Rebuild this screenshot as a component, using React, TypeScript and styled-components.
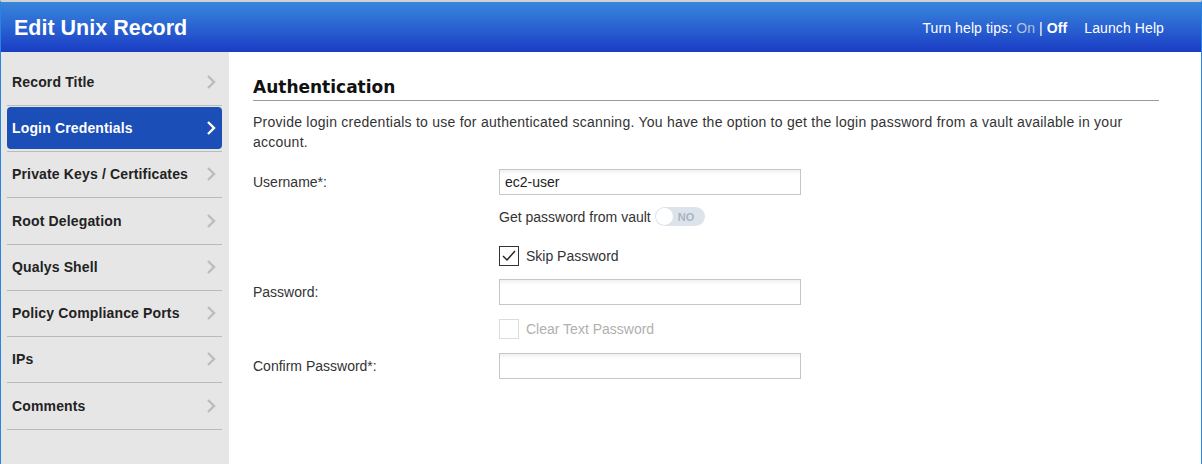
import React from "react";
import styled, { createGlobalStyle } from "styled-components";

const Global = createGlobalStyle`
  html, body { margin: 0; padding: 0; background: #fff; }
  body { font-family: "Liberation Sans", Arial, sans-serif; }
  * { box-sizing: border-box; }
`;

const Frame = styled.div`
  width: 1202px;
  height: 464px;
  border-top: 2px solid #d2d2d2;
  border-left: 1px solid #2784e2;
  border-right: 1px solid #2784e2;
  display: flex;
  flex-direction: column;
  overflow: hidden;
`;

const Header = styled.header`
  height: 50px;
  flex: none;
  background: linear-gradient(to bottom, #3886dd 0%, #2a63d2 50%, #1a3cc4 100%);
  display: flex;
  align-items: center;
  justify-content: space-between;
  padding: 0 37px 0 13px;
  color: #fff;
`;

const Title = styled.h1`
  margin: 0;
  font-size: 21.5px;
  font-weight: bold;
  font-family: "Liberation Sans", Arial, sans-serif;
  padding-top: 2px;
`;

const HelpBar = styled.div`
  display: flex;
  align-items: center;
  gap: 17px;
  font-size: 14px;
  padding-top: 2px;
  letter-spacing: 0.1px;
`;

const HelpToggle = styled.span``;

const Dim = styled.span`
  color: #b3c3dc;
`;

const Strong = styled.span`
  font-weight: bold;
`;

const Body = styled.div`
  flex: 1;
  display: flex;
`;

const Sidebar = styled.nav`
  width: 228px;
  flex: none;
  background: #e6e6e6;
  padding: 7.4px 7px 0 6px;
`;

const NavItem = styled.div`
  border-bottom: 1px solid #bababa;
  padding: 1.3px 0 2px;
`;

const NavLink = styled.div<{ $active?: boolean }>`
  height: 42px;
  display: flex;
  align-items: center;
  justify-content: space-between;
  padding: 0 6px 0 5px;
  border-radius: 4px;
  background: ${(p) => (p.$active ? "#1b4eb6" : "transparent")};
  color: ${(p) => (p.$active ? "#fff" : "#222")};
  font-size: 14px;
  font-weight: bold;
  letter-spacing: 0.15px;
`;

const Chevron = ({ active }: { active?: boolean }) => (
  <svg width="10" height="16" viewBox="0 0 10 16">
    <polyline
      points="2,2 8,8 2,14"
      fill="none"
      stroke={active ? "#fff" : "#bcbcbc"}
      strokeWidth="2.4"
    />
  </svg>
);

const Main = styled.main`
  flex: 1;
  padding: 25px 42px 0 24px;
  color: #333;
  font-size: 14px;
`;

const Heading = styled.h2`
  margin: 0;
  font-family: "DejaVu Sans", Verdana, sans-serif;
  font-weight: bold;
  font-size: 17px;
  line-height: 20px;
  color: #111;
  padding-bottom: 3px;
  border-bottom: 1px solid #9a9a9a;
`;

const Description = styled.p`
  margin: 11px 0 0;
  line-height: 20px;
  color: #333;
  letter-spacing: 0.25px;
`;

const Form = styled.div`
  margin-top: 17px;
  display: grid;
  grid-template-columns: 246px 302px;
`;

const Label = styled.div<{ $gap?: number }>`
  grid-column: 1;
  display: flex;
  align-items: center;
  height: 26px;
  margin-top: ${(p) => p.$gap ?? 0}px;
  color: #333;
`;

const Field = styled.div<{ $gap?: number }>`
  grid-column: 2;
  margin-top: ${(p) => p.$gap ?? 0}px;
`;

const TextInput = styled.div`
  height: 26px;
  border: 1px solid #c6c6c6;
  background: linear-gradient(to bottom, #f1f1f1 0px, #fff 5px);
  display: flex;
  align-items: center;
  padding-left: 5px;
  color: #222;
  font-size: 14px;
`;

const VaultRow = styled.div`
  display: flex;
  align-items: center;
  gap: 4px;
  height: 19px;
  color: #333;
`;

const Toggle = styled.div`
  width: 50px;
  height: 19px;
  border-radius: 10px;
  background: #dde3ea;
  display: flex;
  align-items: center;
  padding-left: 1px;
  gap: 5px;
`;

const Knob = styled.span`
  width: 17px;
  height: 17px;
  border-radius: 50%;
  background: #fff;
`;

const ToggleText = styled.span`
  font-size: 11px;
  font-weight: bold;
  color: #aab4c2;
`;

const CheckRow = styled.div<{ $disabled?: boolean }>`
  display: flex;
  align-items: center;
  gap: 7px;
  height: 20px;
  color: ${(p) => (p.$disabled ? "#b0b0b0" : "#333")};
`;

const Box = styled.span<{ $disabled?: boolean }>`
  width: 20px;
  height: 20px;
  border: 1px solid ${(p) => (p.$disabled ? "#dcdcdc" : "#333")};
  background: #fff;
  display: flex;
  align-items: center;
  justify-content: center;
`;

const navItems = [
  "Record Title",
  "Login Credentials",
  "Private Keys / Certificates",
  "Root Delegation",
  "Qualys Shell",
  "Policy Compliance Ports",
  "IPs",
  "Comments",
];

export default function App() {
  return (
    <>
      <Global />
      <Frame>
        <Header>
          <Title>Edit Unix Record</Title>
          <HelpBar>
            <HelpToggle>
              Turn help tips: <Dim>On</Dim> | <Strong>Off</Strong>
            </HelpToggle>
            <span>Launch Help</span>
          </HelpBar>
        </Header>
        <Body>
          <Sidebar>
            {navItems.map((n) => (
              <NavItem key={n}>
                <NavLink $active={n === "Login Credentials"}>
                  <span>{n}</span>
                  <Chevron active={n === "Login Credentials"} />
                </NavLink>
              </NavItem>
            ))}
          </Sidebar>
          <Main>
            <Heading>Authentication</Heading>
            <Description>
              Provide login credentials to use for authenticated scanning. You have the option to get the login
              password from a vault available in your account.
            </Description>
            <Form>
              <Label>Username*:</Label>
              <Field>
                <TextInput>ec2-user</TextInput>
              </Field>
              <Field $gap={12}>
                <VaultRow>
                  Get password from vault
                  <Toggle>
                    <Knob />
                    <ToggleText>NO</ToggleText>
                  </Toggle>
                </VaultRow>
              </Field>
              <Field $gap={20}>
                <CheckRow>
                  <Box>
                    <svg width="14" height="12" viewBox="0 0 14 12">
                      <polyline points="1,6 5,10 13,1" fill="none" stroke="#222" strokeWidth="1.4" />
                    </svg>
                  </Box>
                  Skip Password
                </CheckRow>
              </Field>
              <Label $gap={13}>Password:</Label>
              <Field $gap={13}>
                <TextInput />
              </Field>
              <Field $gap={14}>
                <CheckRow $disabled>
                  <Box $disabled />
                  Clear Text Password
                </CheckRow>
              </Field>
              <Label $gap={14}>Confirm Password*:</Label>
              <Field $gap={14}>
                <TextInput />
              </Field>
            </Form>
          </Main>
        </Body>
      </Frame>
    </>
  );
}
